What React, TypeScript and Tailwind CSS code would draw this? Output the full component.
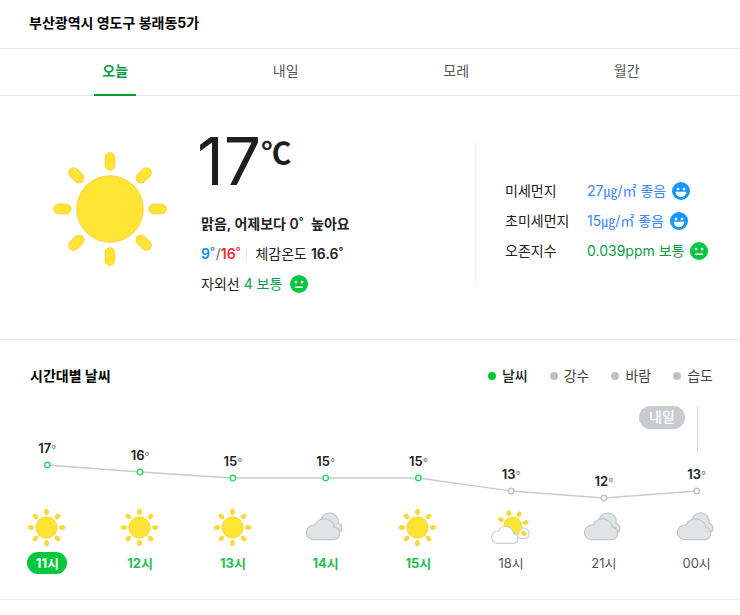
import { useState } from 'react'
import clsx from 'clsx'

type Sky = 'sunny' | 'cloudy' | 'partly'

type Hour = {
  label: string
  temp: number
  sky: Sky
  daytime: boolean
}

const TABS = ['오늘', '내일', '모레', '월간']
const SERIES = ['날씨', '강수', '바람', '습도']

const HOURS: Hour[] = [
  { label: '11시', temp: 17, sky: 'sunny', daytime: true },
  { label: '12시', temp: 16, sky: 'sunny', daytime: true },
  { label: '13시', temp: 15, sky: 'sunny', daytime: true },
  { label: '14시', temp: 15, sky: 'cloudy', daytime: true },
  { label: '15시', temp: 15, sky: 'sunny', daytime: true },
  { label: '18시', temp: 13, sky: 'partly', daytime: false },
  { label: '21시', temp: 12, sky: 'cloudy', daytime: false },
  { label: '00시', temp: 13, sky: 'cloudy', daytime: false },
]

const AIR = [
  { name: '미세먼지', value: '27㎍/㎡ 좋음', good: true },
  { name: '초미세먼지', value: '15㎍/㎡ 좋음', good: true },
  { name: '오존지수', value: '0.039ppm 보통', good: false },
]

const ANGLES = [0, 45, 90, 135, 180, 225, 270, 315]

function BigSun() {
  return (
    <svg viewBox="0 0 114 114" className="h-[114px] w-[114px] shrink-0" aria-hidden="true">
      <g fill="#ffe433" stroke="#fbd24c" strokeWidth="1">
        <circle cx="57" cy="57" r="33.3" />
        {ANGLES.map((a) => (
          <rect
            key={a}
            x="52.1"
            y="0.6"
            width="9.8"
            height="17.6"
            rx="4.9"
            transform={`rotate(${a} 57 57)`}
          />
        ))}
      </g>
    </svg>
  )
}

function SkyIcon({ sky }: { sky: Sky }) {
  if (sky === 'sunny') {
    return (
      <svg viewBox="0 0 40 40" className="h-10 w-10" aria-hidden="true">
        <circle cx="19.5" cy="19.5" r="10.7" fill="#ffe433" stroke="#fbd13f" strokeWidth="0.8" />
        {ANGLES.map((a) => (
          <ellipse
            key={a}
            cx="19.5"
            cy="3.9"
            rx="2"
            ry="2.8"
            fill="#ffdc2b"
            stroke="#fbcf45"
            strokeWidth="0.8"
            transform={`rotate(${a} 19.5 19.5)`}
          />
        ))}
      </svg>
    )
  }

  if (sky === 'cloudy') {
    return (
      <svg viewBox="2 0 40 40" className="h-10 w-10" aria-hidden="true">
        <g fill="#dfe4e6" stroke="#c2c7ca" strokeWidth="1.2">
          <path d="M17 14.5A8.6 8.6 0 1 1 34 15.2A5.2 5.2 0 0 1 35.6 24.5L28 26Z" />
          <path d="M8.7 31.6A7.2 7.2 0 1 1 10.8 17.2A10.4 10.4 0 0 1 30.6 19.2A6.3 6.3 0 0 1 30 31.6Z" />
        </g>
      </svg>
    )
  }

  return (
    <svg viewBox="1 0 40 40" className="h-10 w-10" aria-hidden="true">
      <path
        d="M28 30.5H34.2A4.9 4.9 0 0 0 35.3 20.8A6 6 0 0 0 28 22Z"
        fill="#fff"
        stroke="#ccd0d3"
        strokeWidth="1.2"
      />
      <circle cx="22.7" cy="18" r="9" fill="#ffe433" stroke="#fbc934" strokeWidth="0.8" />
      {[-62, -17, 29, 75, 124].map((a) => (
        <ellipse
          key={a}
          cx="22.7"
          cy="4.6"
          rx="1.9"
          ry="2.6"
          fill="#ffd91f"
          stroke="#fcca35"
          strokeWidth="0.6"
          transform={`rotate(${a} 22.7 18)`}
        />
      ))}
      <path
        d="M7.3 35.3A6.2 6.2 0 1 1 8.6 22.8A8 8 0 0 1 23.6 25.6A4.9 4.9 0 0 1 23.8 35.3Z"
        fill="#fff"
        stroke="#ccd0d3"
        strokeWidth="1.2"
      />
    </svg>
  )
}

function Face({ good }: { good: boolean }) {
  return (
    <svg viewBox="0 0 18 18" className="h-[18px] w-[18px] shrink-0" aria-hidden="true">
      <circle cx="9" cy="9" r="9" fill={good ? '#1498ff' : '#03c73c'} />
      <circle cx="6" cy="7.1" r="1.4" fill="#fff" />
      <circle cx="12" cy="7.1" r="1.4" fill="#fff" />
      {good ? (
        <path d="M3.6 9.7H14.4A5.4 5.2 0 0 1 3.6 9.7Z" fill="#fff" />
      ) : (
        <path d="M5.6 12.2H12.4" stroke="#fff" strokeWidth="1.5" strokeLinecap="round" />
      )}
    </svg>
  )
}

function TempChart({ hours }: { hours: Hour[] }) {
  const points = hours.map((hour, i) => ({
    ...hour,
    x: `${((i + 0.5) / hours.length) * 100}%`,
    y: Math.round(59 + (17 - hour.temp) * 6.6),
  }))

  return (
    <svg className="block h-[102px] w-full" role="img" aria-label="시간대별 기온">
      {points.slice(1).map((p, i) => (
        <line
          key={p.label}
          x1={points[i].x}
          y1={points[i].y}
          x2={p.x}
          y2={p.y}
          stroke="#c9cacf"
          strokeWidth="1.3"
        />
      ))}
      {points.map((p) => (
        <g key={p.label}>
          <circle
            cx={p.x}
            cy={p.y}
            r="2.7"
            fill="#fff"
            stroke={p.daytime ? '#35d464' : '#bfc2c6'}
            strokeWidth="1.4"
          />
          <text x={p.x} y={p.y - 12} textAnchor="middle" className="fill-[#222] text-[13px] font-semibold">
            {p.temp}
            <tspan className="fill-[#7c8aa5] text-[11px] font-medium">°</tspan>
          </text>
        </g>
      ))}
    </svg>
  )
}

export default function App() {
  const [tab, setTab] = useState('오늘')
  const [series, setSeries] = useState('날씨')

  return (
    <main className="overflow-hidden bg-white font-['Inter','Noto_Sans_CJK_KR',sans-serif] text-sm text-[#222]">
      <header className="border-b border-[#e4e9ee] px-[29px] pt-[11px] pb-[13px]">
        <h1 className="leading-6 font-bold text-black">부산광역시 영도구 봉래동5가</h1>
      </header>

      <nav className="grid grid-cols-4 border-b border-[#e4e9ee] pr-7 pl-[30px]">
        {TABS.map((name) => (
          <button
            key={name}
            type="button"
            onClick={() => setTab(name)}
            className={clsx(
              '-mb-px h-[47px] w-[42px] justify-self-center border-b-2 pb-0.5',
              tab === name
                ? 'border-[#009f2c] font-bold text-[#0c9b4a]'
                : 'border-transparent text-[#555]',
            )}
          >
            {name}
          </button>
        ))}
      </nav>

      <section className="flex items-center border-b border-[#e9edf1] pt-[33px] pb-10">
        <div className="flex flex-1 items-start gap-[34px] pl-[53px]">
          <div className="pt-[23px]">
            <BigSun />
          </div>
          <div>
            <div className="-ml-1 flex h-16 items-start text-[#1e1e1e]">
              <strong className="text-[66px] leading-[64px] font-normal">17</strong>
              <span className="font-['Noto_Sans_CJK_KR',sans-serif] text-[30px] leading-[44px] font-bold">
                ℃
              </span>
            </div>
            <p className="mt-4 leading-[30px] font-semibold">
              맑음, 어제보다 <span className="mr-1">0˚</span> 높아요
            </p>
            <p className="flex items-center leading-[30px]">
              <span className="font-semibold text-[#0b8df5]">9˚</span>
              <span className="ml-px text-[#666]">/</span>
              <span className="font-semibold text-[#fb2734]">16˚</span>
              <span className="mr-2 ml-1.5 h-3 w-px bg-[#e5e7ea]" />
              <span>
                체감온도 <b className="font-semibold">16.6˚</b>
              </span>
            </p>
            <p className="flex items-center leading-[30px]">
              자외선
              <span className="mr-2 ml-1 text-[#0f9b52]">4 보통</span>
              <Face good={false} />
            </p>
          </div>
        </div>

        <dl className="flex h-[143px] w-[265px] shrink-0 flex-col justify-center border-l border-[#eceef0] pt-3.5 pl-[29px]">
          {AIR.map((row) => (
            <div key={row.name} className="flex leading-[30px]">
              <dt className="w-[82px]">{row.name}</dt>
              <dd
                className={clsx(
                  'flex items-center gap-1.5',
                  row.good ? 'text-[#3e88f7]' : 'text-[#0f9b43]',
                )}
              >
                {row.value}
                <Face good={row.good} />
              </dd>
            </div>
          ))}
        </dl>
      </section>

      <section className="border-b border-[#e9edf1] pt-6 pb-[25px]">
        <div className="flex items-center justify-between pr-[27px] pl-[30px]">
          <h2 className="leading-6 font-bold text-black">시간대별 날씨</h2>
          <div className="flex gap-[22px]">
            {SERIES.map((name) => (
              <button
                key={name}
                type="button"
                onClick={() => setSeries(name)}
                className={clsx(
                  'flex items-center gap-1.5 leading-6',
                  series === name ? 'font-medium text-[#222]' : 'text-[#444]',
                )}
              >
                <span
                  className={clsx(
                    'h-2 w-2 rounded-full',
                    series === name ? 'bg-[#03c73c]' : 'bg-[#bfbfbf]',
                  )}
                />
                {name}
              </button>
            ))}
          </div>
        </div>

        <div className="relative mt-[18px] -mr-[3px] ml-px">
          <TempChart hours={HOURS} />
          {/* marks where the next day starts */}
          <div className="absolute top-0 right-[45px] flex gap-3">
            <span className="h-[23px] w-[46px] rounded-full bg-[#c8ccd0] text-center leading-[22px] font-medium text-white">
              내일
            </span>
            <span className="h-[47px] w-px bg-[#dcdee0]" />
          </div>
        </div>

        <ol className="-mr-[3px] ml-px grid grid-cols-8">
          {HOURS.map((hour, i) => (
            <li key={hour.label} className="flex flex-col items-center gap-1">
              <SkyIcon sky={hour.sky} />
              <span
                className={clsx(
                  'text-[13px] leading-[22px]',
                  i === 0 && 'w-10 rounded-full bg-[#03c73c] text-center font-bold text-white',
                  i > 0 && hour.daytime && 'font-bold text-[#1fc04b]',
                  !hour.daytime && 'text-[#555]',
                )}
              >
                {hour.label}
              </span>
            </li>
          ))}
        </ol>
      </section>
    </main>
  )
}
